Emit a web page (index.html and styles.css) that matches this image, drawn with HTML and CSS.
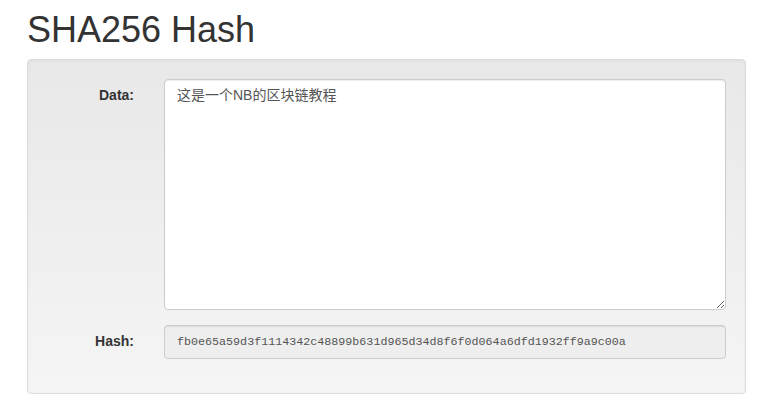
FILE: index.html
```html
<!DOCTYPE html>
<html lang="zh">
<head>
    <meta charset="UTF-8">
    <meta name="viewport" content="width=device-width, initial-scale=1.0">
    <title>SHA256 Hash</title>
    <link rel="stylesheet" href="styles.css">
</head>
<body>
    <div class="container">
        <h1>SHA256 Hash</h1>
        <div class="well">
            <form class="form-horizontal">
                <div class="form-group">
                    <label for="data" class="control-label">Data:</label>
                    <div class="field">
                        <textarea id="data" class="form-control data-input">这是一个NB的区块链教程</textarea>
                    </div>
                </div>
                <div class="form-group">
                    <label for="hash" class="control-label">Hash:</label>
                    <div class="field">
                        <input id="hash" class="form-control hash-input" type="text" readonly value="fb0e65a59d3f1114342c48899b631d965d34d8f6f0d064a6dfd1932ff9a9c00a">
                    </div>
                </div>
            </form>
        </div>
    </div>
</body>
</html>
```

FILE: styles.css
```css
* {
    box-sizing: border-box;
}
body {
    margin: 0;
    font-family: "Liberation Sans", Arial, "Noto Sans CJK SC", sans-serif;
    font-size: 14px;
    line-height: 1.42857;
    color: #333;
    background-color: #fff;
}
.container {
    padding: 0 21px 0 27px;
}
h1 {
    margin: 10px 0 9px;
    font-size: 36px;
    font-weight: 500;
    line-height: 1.1;
    color: #333;
}
.well {
    padding: 19px;
    border: 1px solid #dcdcdc;
    border-radius: 4px;
    background-image: linear-gradient(to bottom, #e8e8e8 0, #f5f5f5 100%);
    box-shadow: inset 0 1px 3px rgba(0, 0, 0, 0.05), 0 1px 0 rgba(255, 255, 255, 0.1);
}
.form-group {
    display: flex;
    margin: 0 -15px 15px;
}
.control-label {
    flex: 0 0 117px;
    padding: 7px 15px 0;
    text-align: right;
    font-weight: bold;
}
.field {
    flex: 1;
    padding: 0 15px;
}
.form-control {
    display: block;
    width: 100%;
    padding: 6px 12px;
    font-size: 14px;
    line-height: 1.42857;
    color: #555;
    background-color: #fff;
    border: 1px solid #ccc;
    border-radius: 4px;
    box-shadow: inset 0 1px 1px rgba(0, 0, 0, 0.075);
    font-family: "Liberation Sans", Arial, "Noto Sans CJK SC", sans-serif;
}
.data-input {
    height: 231px;
    resize: vertical;
}
.hash-input {
    height: 34px;
    background-color: #eee;
    font-family: "Liberation Mono", "Courier New", monospace;
    font-size: 11.7px;
}
```
